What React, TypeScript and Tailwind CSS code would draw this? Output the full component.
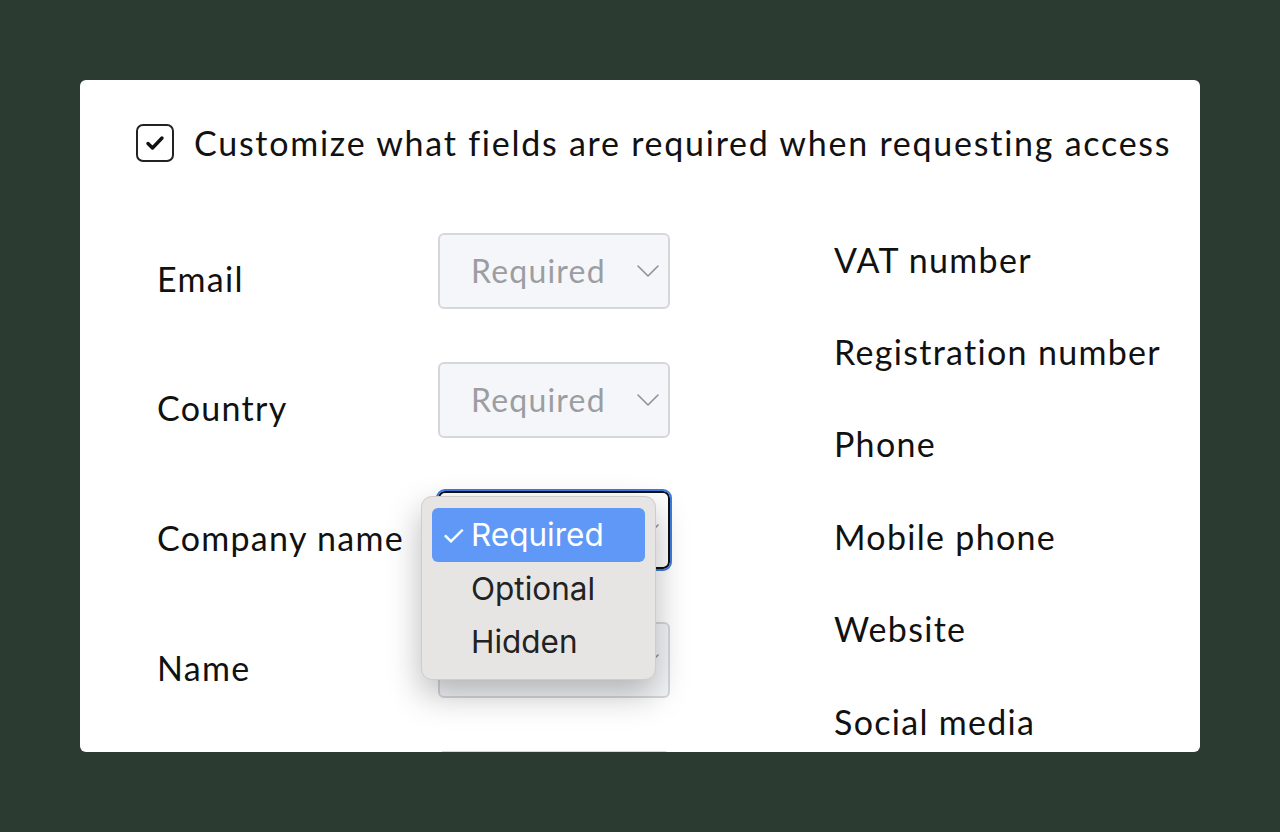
import React from 'react';

const leftFields = ['Email', 'Country', 'Company name', 'Name', 'Address'];
const rightFields = ['VAT number', 'Registration number', 'Phone', 'Mobile phone', 'Website', 'Social media', 'Notes'];

function Chevron() {
  return (
    <svg width="24" height="14" viewBox="0 0 24 14" fill="none" className="shrink-0">
      <path d="M2 2l10 10L22 2" stroke="#8f9298" strokeWidth="1.6" strokeLinecap="round" strokeLinejoin="round" />
    </svg>
  );
}

function Select({ focused }: { focused?: boolean }) {
  return (
    <div
      className={
        focused
          ? 'flex h-[78px] w-[232px] items-center justify-between rounded-[7px] border-2 border-[#111] bg-white pl-[31px] pr-[8px] outline-2 outline-[#3d7be0]'
          : 'flex h-[76px] w-[232px] items-center justify-between rounded-[6px] border-2 border-[#d6d7da] bg-[#f5f6f9] pl-[31px] pr-[8px]'
      }
    >
      <span className="text-[32px] tracking-[1.2px] text-[#9c9da1]">Required</span>
      <Chevron />
    </div>
  );
}

function Dropdown() {
  return (
    <div className="absolute left-[-17px] top-[5px] z-10 w-[235px] rounded-[11px] border border-[#cfcdcb] bg-[#e7e5e3] px-[10px] py-[11px] shadow-[0_14px_34px_rgba(0,0,0,0.28)] font-['Inter',sans-serif] tracking-normal">
      <div className="flex h-[54px] items-center rounded-[6px] bg-[#5f98f6] pl-[9px] text-white">
        <span className="w-[30px] text-[28px]">✓</span>
        <span className="text-[31.5px]">Required</span>
      </div>
      <div className="flex h-[53px] items-center pl-[39px] text-[31.5px] text-[#222]">Optional</div>
      <div className="flex h-[53px] items-center pl-[39px] text-[31.5px] text-[#222]">Hidden</div>
    </div>
  );
}

export default function App() {
  return (
    <div className="min-h-screen bg-[#2c3b32] px-20 pt-20 font-['Lato',sans-serif] text-[#111]">
      <div className="h-[672px] overflow-hidden rounded-[6px] bg-white">
        {/* Header checkbox */}
        <div className="flex items-center gap-[20px] pl-[56px] pt-[37px]">
          <div className="flex h-[38px] w-[38px] shrink-0 items-center justify-center rounded-[7px] border-2 border-[#222]">
            <svg width="20" height="16" viewBox="0 0 20 16" fill="none">
              <path d="M3 8.5l4.5 4.5L17 3" stroke="#111" strokeWidth="3.4" strokeLinecap="round" strokeLinejoin="round" />
            </svg>
          </div>
          <span className="whitespace-nowrap text-[34px] tracking-[1.75px]">
            Customize what fields are required when requesting access
          </span>
        </div>

        {/* Fields */}
        <div className="mt-[45px] flex tracking-[1.3px]">
          <div className="flex flex-col gap-[53px] pl-[77px] pt-[20px]">
            {leftFields.map((f, i) => (
              <div key={f} className="flex items-center">
                <span className="w-[281px] whitespace-nowrap pt-[14px] text-[34px]">{f}</span>
                <div className="relative">
                  <Select focused={i === 2} />
                  {i === 2 && <Dropdown />}
                </div>
              </div>
            ))}
          </div>
          <div className="ml-[164px] flex flex-col">
            {rightFields.map((f) => (
              <div key={f} className="flex h-[92.4px] items-center whitespace-nowrap text-[34px]">
                {f}
              </div>
            ))}
          </div>
        </div>
      </div>
    </div>
  );
}
